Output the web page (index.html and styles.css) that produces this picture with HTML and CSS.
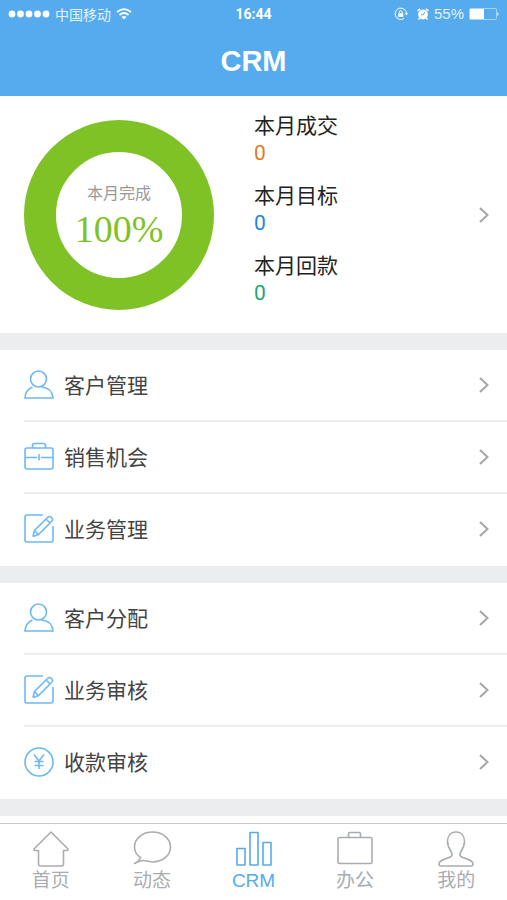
FILE: index.html
```
<!DOCTYPE html>
<html lang="zh-CN">

<head>
    <meta charset="utf-8">
    <meta name="viewport" content="width=device-width, initial-scale=1">
    <title>CRM</title>
    <link rel="stylesheet" href="styles.css">
</head>

<body>
    <!-- 公用图标 -->
    <svg class="sprite" aria-hidden="true">
        <symbol id="arrow" viewBox="0 0 10 16">
            <path d="M1 1L8.500 8L1 15" />
        </symbol>
        <symbol id="user" viewBox="0 0 30 30">
            <circle cx="14.500" cy="9" r="8" />
            <path d="M8.500 17C4 19 1.200 22.500 1 28H29C28.500 22.500 25 17.500 17.500 17" />
        </symbol>
        <symbol id="bag" viewBox="0 0 30 30">
            <rect x="1" y="6" width="28" height="21" rx="2" />
            <path d="M8.500 6V3.500Q8.500 1.500 10.500 1.500H19.500Q21.500 1.500 21.500 3.500V6M1 15.500H13M17 15.500H29M15 12V18.500" />
        </symbol>
        <symbol id="edit" viewBox="0 0 30 30">
            <path d="M19 1H3Q1 1 1 3V26Q1 28 3 28H27Q29 28 29 26V12" />
            <path d="M9 22.500L10.500 16.500L23.500 3.500Q25.500 1.500 27.500 3.500T27.500 7.500L14.500 20.500L9 22.500M10.500 16.500L14.500 20.500M22 5L26 9" />
        </symbol>
        <symbol id="money" viewBox="0 0 30 30">
            <circle cx="15" cy="15" r="14" />
            <path d="M10 7.500L15 14L20 7.500M15 14V22M10.500 14.500H19.500M10.500 18.500H19.500" />
        </symbol>
    </svg>

    <header class="header">
        <div class="status">
            <div class="status-left">
                <svg class="signal" width="42" height="8" viewBox="0 0 42 8">
                    <circle cx="4" cy="4" r="3.400" />
                    <circle cx="12.500" cy="4" r="3.400" />
                    <circle cx="21" cy="4" r="3.400" />
                    <circle cx="29.500" cy="4" r="3.400" />
                    <circle cx="38" cy="4" r="3.400" />
                </svg>
                <span class="carrier">中国移动</span>
                <svg width="16" height="12" viewBox="0 0 16 12" fill="none" stroke="#fff" stroke-width="1.800">
                    <path d="M1 4.200Q8 -2 15 4.200M3.500 7Q8 3 12.500 7" />
                    <path d="M5.500 9Q8 7 10.500 9L8 11.500Z" fill="#fff" stroke="none" />
                </svg>
            </div>
            <time class="clock">16:44</time>
            <div class="status-right">
                <svg class="lock" width="14" height="14" viewBox="0 0 14 14" fill="none" stroke="#fff">
                    <path d="M10 11.500A5.700 5.700 0 1 1 12.500 6.500" />
                    <path d="M10.800 6.300H14L12.500 8.500Z" fill="#fff" stroke="none" />
                    <path d="M4.300 6.300H9.300V10H4.300Z" fill="#fff" stroke="none" />
                    <path d="M5.300 6.500V5.200Q5.300 3.800 6.800 3.800T8.300 5.200V6.500" />
                </svg>
                <svg width="12" height="12" viewBox="0 0 12 12">
                    <circle cx="6" cy="6.500" r="4.900" fill="#fff" />
                    <path d="M.500 3L3 .800M11.500 3L9 .800M2.800 10L1.500 11.500M9.200 10L10.500 11.500" stroke="#fff" stroke-width="1.500" />
                    <path d="M3.800 6.800H6.200L7.800 4" fill="none" stroke="#56abee" />
                </svg>
                <span class="percent">55%</span>
                <svg width="30" height="12" viewBox="0 0 30 12">
                    <rect x=".5" y=".5" width="27" height="11" rx="1" fill="none" stroke="#a9d4f7" />
                    <rect x="1" y="1" width="14" height="10" fill="#fff" />
                    <path d="M28.500 4Q30.500 6 28.500 8Z" fill="#fff" />
                </svg>
            </div>
        </div>
        <h1 class="title">CRM</h1>
    </header>

    <main class="main">
        <a class="summary" href="#">
            <div class="ring">
                <span class="ring-label">本月完成</span>
                <span class="ring-value">100%</span>
            </div>
            <dl class="stats">
                <div>
                    <dt>本月成交</dt>
                    <dd class="orange">0</dd>
                </div>
                <div>
                    <dt>本月目标</dt>
                    <dd class="blue">0</dd>
                </div>
                <div>
                    <dt>本月回款</dt>
                    <dd class="green">0</dd>
                </div>
            </dl>
            <svg class="arrow"><use href="#arrow" /></svg>
        </a>

        <nav class="group">
            <a class="row" href="#">
                <svg class="icon"><use href="#user" /></svg>
                <span>客户管理</span>
                <svg class="arrow"><use href="#arrow" /></svg>
            </a>
            <a class="row" href="#">
                <svg class="icon"><use href="#bag" /></svg>
                <span>销售机会</span>
                <svg class="arrow"><use href="#arrow" /></svg>
            </a>
            <a class="row" href="#">
                <svg class="icon"><use href="#edit" /></svg>
                <span>业务管理</span>
                <svg class="arrow"><use href="#arrow" /></svg>
            </a>
        </nav>

        <nav class="group">
            <a class="row" href="#">
                <svg class="icon"><use href="#user" /></svg>
                <span>客户分配</span>
                <svg class="arrow"><use href="#arrow" /></svg>
            </a>
            <a class="row" href="#">
                <svg class="icon"><use href="#edit" /></svg>
                <span>业务审核</span>
                <svg class="arrow"><use href="#arrow" /></svg>
            </a>
            <a class="row" href="#">
                <svg class="icon"><use href="#money" /></svg>
                <span>收款审核</span>
                <svg class="arrow"><use href="#arrow" /></svg>
            </a>
        </nav>

        <div class="group rest"></div>
    </main>

    <nav class="tabbar">
        <a class="tab" href="#">
            <svg class="tab-icon" viewBox="0 0 36 36">
                <path d="M18 1L35 18Q35.500 19.500 34 19.500H30.500V33Q30.500 35 28.500 35H7.500Q5.500 35 5.500 33V19.500H2Q.500 19.500 1 18Z" />
            </svg>
            <span>首页</span>
        </a>
        <a class="tab" href="#">
            <svg class="tab-icon" viewBox="0 0 36 36">
                <path d="M6.500 26.500C2.500 24 .500 20 .500 16C.500 7.500 8.500 1 18.500 1S36.500 7.500 36.500 16S28.500 31 18.500 31C15.500 31 12.500 29.500 9.500 29.500Q6 29.500 .500 32.500Q5.500 30 6.500 26.500Z" />
            </svg>
            <span>动态</span>
        </a>
        <a class="tab active" href="#">
            <svg class="tab-icon" viewBox="0 0 36 36">
                <path d="M1 17.500H9V34H1ZM14 1.500H22V34H14ZM27 11.500H35V34H27Z" />
            </svg>
            <span>CRM</span>
        </a>
        <a class="tab" href="#">
            <svg class="tab-icon" viewBox="0 0 36 36">
                <rect x="1" y="6.500" width="34" height="26" rx="1.500" />
                <path d="M11.500 6.500V3Q11.500 1.500 13 1.500H22Q23.500 1.500 23.500 3V6.500" />
            </svg>
            <span>办公</span>
        </a>
        <a class="tab" href="#">
            <svg class="tab-icon" viewBox="0 0 36 36">
                <path d="M18 1C12.500 1 9.500 5 9.500 10.500C9.500 15 11.500 18 13 20.500C15 24 14 25.500 11 26.500C6 28.500 1 29.500 1 33Q1 35 3 35H33Q35 35 35 33C35 29.500 30 28.500 25 26.500C22 25.500 21 24 23 20.500C24.500 18 26.500 15 26.500 10.500C26.500 5 23.500 1 18 1Z" />
            </svg>
            <span>我的</span>
        </a>
    </nav>
</body>

</html>
```
FILE: styles.css
```
* {
    margin: 0;
    padding: 0;
    box-sizing: border-box;
}

body {
    display: flex;
    flex-direction: column;
    min-height: 100vh;
    background-color: #ebedef;
    font-family: "Liberation Sans", "Noto Sans CJK SC", sans-serif;
    color: #444;
}

a {
    color: inherit;
    text-decoration: none;
}

svg {
    flex: none;
}

.sprite {
    position: absolute;
    width: 0;
    height: 0;
}

/* 顶部 */
.header {
    height: 96px;
    background-color: #56abee;
    color: #fff;
}

.status {
    display: grid;
    grid-template-columns: 1fr auto 1fr;
    align-items: center;
    height: 27px;
    padding: 0 8px;
    font-size: 14px;
}

.status-left,
.status-right {
    display: flex;
    align-items: center;
    gap: 5px;
}

.status-right {
    justify-content: flex-end;
}

.signal {
    fill: #fff;
}

.lock {
    margin-right: 4px;
}

.carrier,
.percent {
    color: #e3f2fd;
}

.percent {
    font-size: 15px;
}

.clock {
    font-family: Roboto, sans-serif;
    font-weight: 700;
}

.title {
    font-size: 29px;
    line-height: 68px;
    text-align: center;
}

/* 内容 */
.main {
    flex: 1;
    display: flex;
    flex-direction: column;
    gap: 17px;
}

.summary {
    display: flex;
    align-items: center;
    height: 237px;
    padding: 0 18px 0 24px;
    background-color: #fff;
}

.ring {
    display: flex;
    flex-direction: column;
    align-items: center;
    justify-content: center;
    width: 190px;
    height: 190px;
    padding-top: 4px;
    border: 32px solid #7fc225;
    border-radius: 50%;
}

.ring-label {
    font-size: 16px;
    line-height: 24px;
    color: #999;
}

.ring-value {
    font-family: "Liberation Serif", serif;
    font-size: 38px;
    line-height: 46px;
    color: #7fc225;
}

.stats {
    flex: 1;
    display: flex;
    flex-direction: column;
    gap: 16px;
    margin-left: 40px;
    padding-bottom: 12px;
    font-size: 21px;
    line-height: 28px;
    color: #222;
}

.stats dd {
    font-family: Roboto, sans-serif;
    line-height: 26px;
}

.stats .orange {
    color: #e07b1c;
}

.stats .blue {
    color: #2186dd;
}

.stats .green {
    color: #1ba772;
}

.arrow {
    width: 10px;
    height: 16px;
    fill: none;
    stroke: #a6a6a6;
    stroke-width: 2;
}

.group {
    padding-left: 24px;
    background-color: #fff;
}

.row {
    display: flex;
    align-items: center;
    height: 72px;
    padding-right: 18px;
    border-bottom: 2px solid #eceef0;
    font-size: 21px;
}

.row:last-child {
    border-bottom-color: transparent;
}

.row span {
    flex: 1;
    margin-left: 10px;
    padding-bottom: 2px;
}

.icon {
    width: 30px;
    height: 30px;
    fill: none;
    stroke: #6fb8f3;
    stroke-width: 1.600;
}

.rest {
    flex: 1;
}

/* 底部导航 */
.tabbar {
    display: flex;
    height: 77px;
    border-top: 1px solid #c4c6c9;
    background-color: #fff;
}

.tab {
    flex: 1;
    display: flex;
    flex-direction: column;
    align-items: center;
    gap: 2px;
    padding-top: 7px;
    font-size: 19px;
    line-height: 24px;
    color: #a9adb1;
}

.tab-icon {
    width: 36px;
    height: 36px;
    overflow: visible;
    fill: none;
    stroke: #a9adb1;
    stroke-width: 1.600;
    stroke-linejoin: round;
}

.active {
    color: #56abee;
}

.active .tab-icon {
    stroke: #56abee;
}
```
